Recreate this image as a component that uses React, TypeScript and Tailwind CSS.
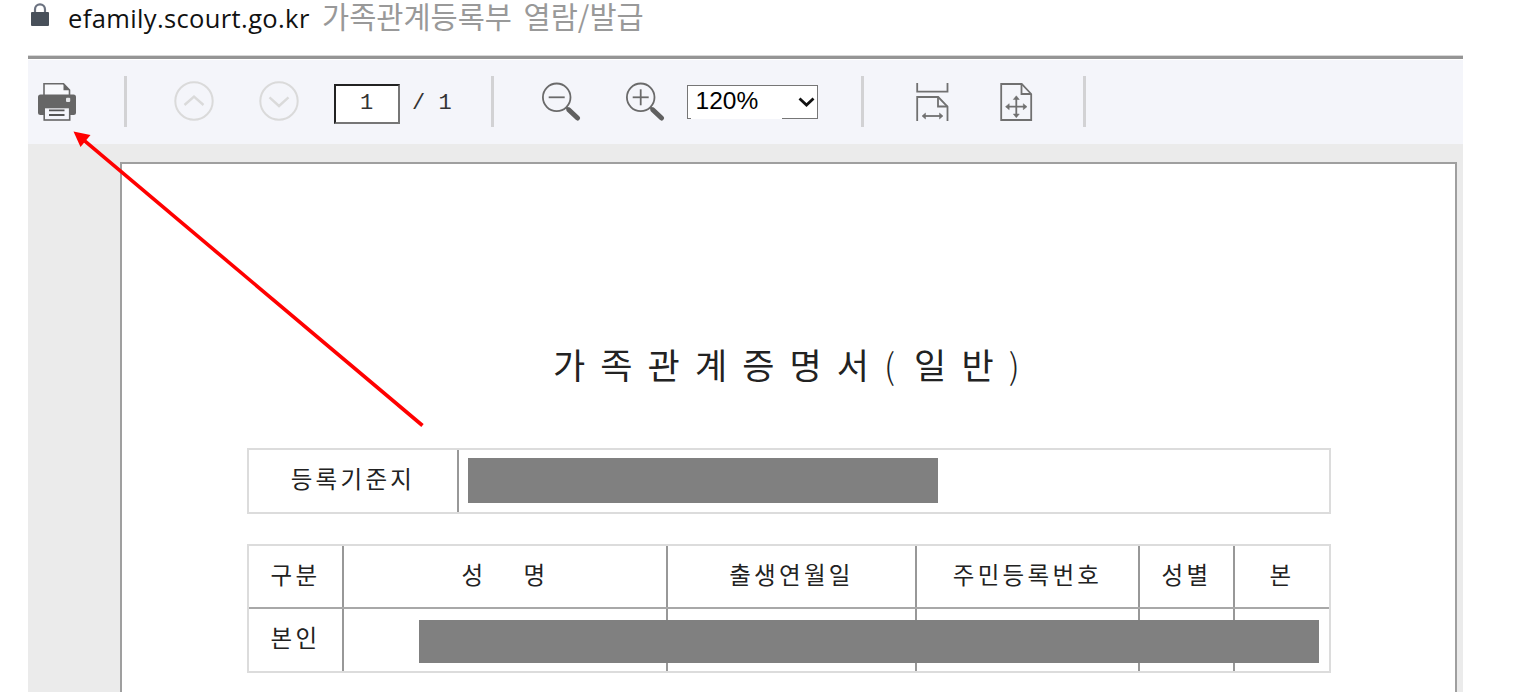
import type { ReactNode } from "react";

function LockIcon() {
  return (
    <svg className="mt-[3px] h-6 w-5 shrink-0" viewBox="0 0 20 24" fill="none">
      <path d="M5 10V6.400a5 5 0 0 1 10 0V10" stroke="#6b7280" strokeWidth="2.200" />
      <rect x="1" y="9" width="18" height="14" rx="1" fill="#48505a" />
    </svg>
  );
}

function PrinterIcon() {
  return (
    <svg className="h-10 w-10" viewBox="0 0 40 40" fill="none">
      <path d="M7 13V1.7h19.5L32.5 8v5" stroke="#6a6a6a" strokeWidth="1.6" fill="#f8f9fc" />
      <path d="M26.5 1.7 33 8.2h-6.5z" fill="#666" />
      <path
        d="M3.5 12.5h33a2.5 2.5 0 0 1 2.5 2.5v15.5a2.5 2.5 0 0 1-2.5 2.5h-33A2.5 2.5 0 0 1 1 30.500V15a2.500 2.500 0 0 1 2.500-2.500z"
        fill="#666"
      />
      <rect x="29" y="15.800" width="4.200" height="4.200" rx="1" fill="#e4e5e8" />
      <rect x="7.200" y="25.500" width="25.500" height="12.500" fill="#f4f5fa" stroke="#666" strokeWidth="1.600" />
      <path d="M12 28.300h15.500M12 33h15.500" stroke="#555" strokeWidth="1.800" />
    </svg>
  );
}

function CircleChevron({ down = false }: { down?: boolean }) {
  return (
    <svg className="h-10 w-10" viewBox="0 0 40 40" fill="none" stroke="#dadada" strokeWidth="2">
      <circle cx="20" cy="20" r="18.7" />
      <path d={down ? "M10.500 16.300 20 25l9.500-8.700" : "M10.500 24 20 15.500l9.500 8.500"} strokeWidth="2.400" />
    </svg>
  );
}

function Magnifier({ plus = false }: { plus?: boolean }) {
  return (
    <svg className="h-10 w-10" viewBox="0 0 40 40" fill="none" stroke="#6a6a6a" strokeWidth="1.8">
      <circle cx="15.700" cy="15.300" r="13.800" />
      <path d="M7.700 15.300h16" />
      {plus && <path d="M15.700 7.300v16" />}
      <path d="m25.500 25.500 3 3" strokeWidth="3" />
      <path d="m28 28 8.500 8" stroke="#606060" strokeWidth="5" strokeLinecap="round" />
    </svg>
  );
}

function FitWidthIcon() {
  return (
    <svg className="h-10 w-[34px]" viewBox="0 0 34 40" fill="none" stroke="#707070" strokeWidth="1.8">
      <path d="M2.200 1v8.700h30.300V1" />
      <path d="M2.200 39V15h21L32.500 24.500V39" />
      <path d="M23 15v9.500h9.500" />
      <path d="M9 34h17" />
      <path d="m7 34 3.500-3v6zM28 34l-3.500-3v6z" fill="#707070" strokeWidth=".5" />
    </svg>
  );
}

function FitPageIcon() {
  return (
    <svg className="h-10 w-[34px]" viewBox="0 0 34 40" fill="none" stroke="#707070" strokeWidth="1.800">
      <path d="M2.200 2h20.500l9.500 10v26h-30z" />
      <path d="M22.500 2v10h9.500" />
      <path d="M9 24.700h16.500M17.300 16v17.500" />
      <path
        d="m6.500 24.700 3.700-3v6zM28 24.700l-3.700-3v6zM17.300 13.800l-3 3.700h6zM17.300 35.700l-3-3.700h6z"
        fill="#707070"
        strokeWidth=".5"
      />
    </svg>
  );
}

function Separator() {
  return <div className="h-[51px] w-[3px] bg-[#d2d2d4]" />;
}

function Toolbar() {
  return (
    <div className="flex h-[84px] bg-[#f4f5fa] pt-4">
      <button className="ml-[9px] mt-[6px] h-10">
        <PrinterIcon />
      </button>
      <div className="ml-[47px]">
        <Separator />
      </div>
      <button className="ml-[47px] mt-[5px] h-10">
        <CircleChevron />
      </button>
      <button className="ml-[45px] mt-[5px] h-10">
        <CircleChevron down />
      </button>
      <div className="ml-[35px] mt-2 flex h-10 w-[66px] items-center justify-center border-2 border-t-[#222] border-r-[#767676] border-b-[#767676] border-l-[#222] bg-white pr-px pb-[2px] font-['Liberation_Mono',monospace] text-[22px] text-[#333]">
        1
      </div>
      <div className="ml-[12px] mt-[14px] whitespace-pre font-['Liberation_Mono',monospace] text-[22px]/[28px] text-[#333]">
        / 1
      </div>
      <div className="ml-[39px]">
        <Separator />
      </div>
      <button className="ml-[47px] mt-[6px] h-10">
        <Magnifier />
      </button>
      <button className="ml-11 mt-[6px] h-10">
        <Magnifier plus />
      </button>
      <div className="relative ml-[22px] mt-[9px] flex h-[34px] w-[131px] items-center justify-between border border-[#767676] bg-white pr-[2px] pl-[8px] font-['Liberation_Sans',sans-serif] text-[24.500px] text-black">
        <span className="-mt-[2px]">120%</span>
        <svg className="h-[10px] w-[17px]" viewBox="0 0 17 10" fill="none">
          <path d="m1.500 1.500 7 6.500 7-6.500" stroke="#111" strokeWidth="2.800" />
        </svg>
        <span className="absolute -bottom-px left-[3px] h-px w-[91px] bg-white" />
      </div>
      <div className="ml-[43px]">
        <Separator />
      </div>
      <button className="ml-[51px] mt-[6px] h-10">
        <FitWidthIcon />
      </button>
      <button className="ml-[50px] mt-[6px] h-10">
        <FitPageIcon />
      </button>
      <div className="ml-[50px]">
        <Separator />
      </div>
    </div>
  );
}

function Cell({ children, className = "" }: { children?: ReactNode; className?: string }) {
  return (
    <div className={`flex items-center justify-center whitespace-pre border-[#989898] ${className}`}>
      {children}
    </div>
  );
}

function Certificate() {
  return (
    <div className="ml-[92px] mt-[18px] h-[620px] w-[1337px] border-2 border-[#9f9f9f] bg-white font-['Noto_Sans_CJK_KR',sans-serif] text-[#222]">
      <h1 className="ml-[431px] mt-[170px] flex h-[60px] items-center whitespace-nowrap text-[35px]">
        <span className="tracking-[15.100px]">가족관계증명서</span>
        <span className="w-[30px] font-light">(</span>
        <span className="tracking-[15.100px]">일반</span>
        <span className="font-light">)</span>
      </h1>

      <div className="ml-[125px] mt-[54px] flex h-[66px] w-[1084px] border-2 border-[#dcdcdc] text-[23.500px] tracking-[3.300px]">
        <Cell className="h-[62px] w-[210px] border-r-2 pb-1">등록기준지</Cell>
        <div className="ml-[9px] mt-[8px] h-[45px] w-[470px] bg-[#808080]" />
      </div>

      <div className="relative ml-[125px] mt-[30px] w-[1084px] border-2 border-[#dcdcdc] text-[23.500px] tracking-[3.300px]">
        <div className="flex border-b-2 border-[#a8a8a8]">
          <Cell className="h-[61px] w-[95px] border-r-2 pb-[3px]">구분</Cell>
          <Cell className="h-[61px] w-[324px] border-r-2 pb-[3px]">
            <span>성</span>
            <span className="ml-[37px]">명</span>
          </Cell>
          <Cell className="h-[61px] w-[249px] border-r-2 pb-[3px]">출생연월일</Cell>
          <Cell className="h-[61px] w-[223px] border-r-2 pb-[3px]">주민등록번호</Cell>
          <Cell className="h-[61px] w-[95px] border-r-2 pb-[3px]">성별</Cell>
          <Cell className="h-[61px] flex-1 pb-[3px]">본</Cell>
        </div>
        <div className="flex">
          <Cell className="h-[62px] w-[95px] border-r-2 pb-[4px]">본인</Cell>
          <Cell className="h-[62px] w-[324px] border-r-2" />
          <Cell className="h-[62px] w-[249px] border-r-2" />
          <Cell className="h-[62px] w-[223px] border-r-2" />
          <Cell className="h-[62px] w-[95px] border-r-2" />
        </div>
        <div className="absolute top-[74px] left-[170px] h-[43px] w-[900px] bg-[#808080]" />
      </div>
    </div>
  );
}

export default function App() {
  return (
    <div className="relative h-[692px] w-[1514px] overflow-hidden bg-white">
      <div className="flex h-[55px] items-start pl-[30px]">
        <LockIcon />
        <span className="ml-[18px] w-[254px] whitespace-nowrap font-['Open_Sans',sans-serif] text-[25.500px]/[36px] tracking-[0.370px] text-[#111]">
          efamily.scourt.go.kr
        </span>
        <span className="whitespace-nowrap font-['Noto_Sans_CJK_KR',sans-serif] text-[29.500px]/[30px] font-normal text-[#999] [word-spacing:5px]">
          가족관계등록부 열람/발급
        </span>
      </div>

      <div className="ml-7 h-[637px] w-[1435px] bg-[#ebebeb]">
        <div className="h-[5px] border-t border-[#d8d8d8] bg-white">
          <div className="h-[3px] bg-[#959595]" />
        </div>
        <Toolbar />
        <Certificate />
      </div>

      {/* Arrow pointing at the print button */}
      <svg className="pointer-events-none absolute top-[120px] left-[60px] h-[320px] w-[380px]" viewBox="60 120 380 320">
        <path d="M82 138.700 422.500 425.500" stroke="#ff0000" strokeWidth="3.600" />
        <path d="m73.500 131.500 17 3.500-10 12z" fill="#ff0000" />
      </svg>
    </div>
  );
}
